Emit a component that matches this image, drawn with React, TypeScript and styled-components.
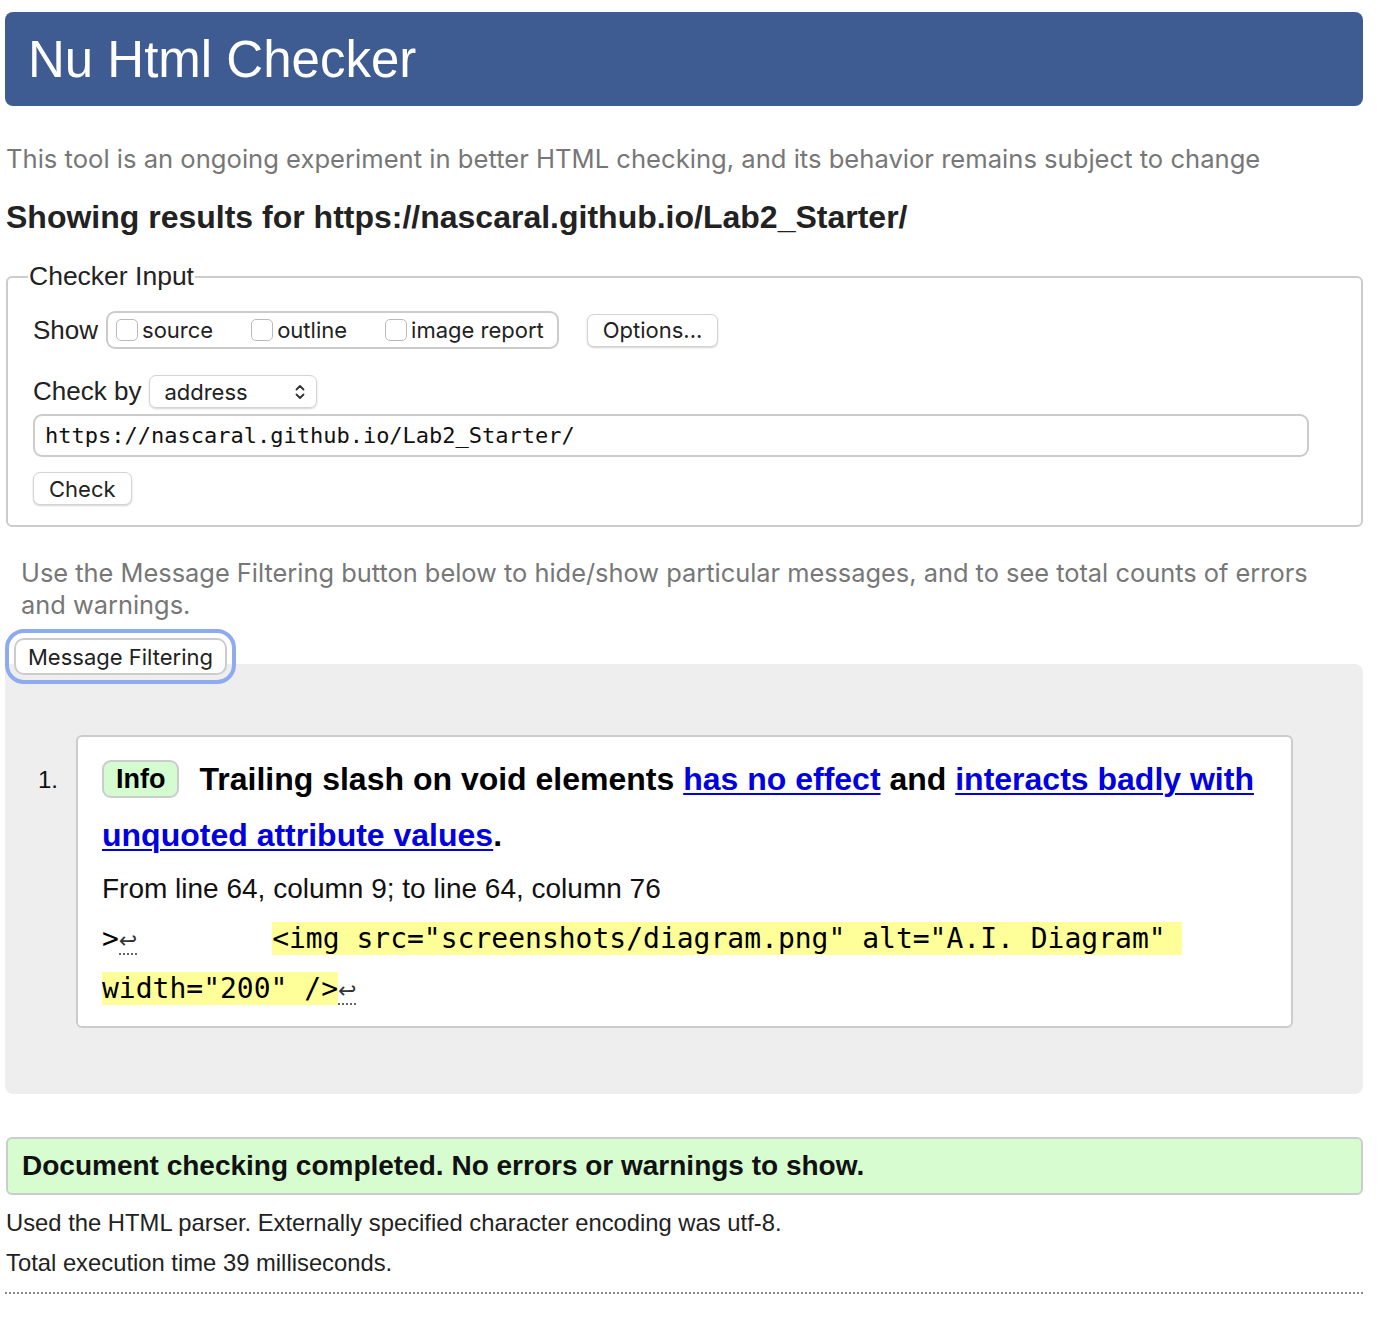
import React from 'react';
import styled, { createGlobalStyle } from 'styled-components';

const GlobalStyle = createGlobalStyle`
  html, body {
    margin: 0;
    padding: 0;
    background: #fff;
  }
  body {
    font-family: "Liberation Sans", Arial, sans-serif;
    color: #111;
  }
`;

const Page = styled.div`
  padding: 12px 33px 40px 5px;
`;

const Header = styled.h1`
  margin: 0;
  background: #3e5c92;
  color: #fff;
  border-radius: 8px;
  height: 94px;
  display: flex;
  align-items: center;
  padding-left: 23px;
  font-family: "Liberation Sans", Arial, sans-serif;
  font-weight: 400;
  font-size: 51px;
`;

const Intro = styled.p`
  margin: 37px 0 0 1px;
  font-family: Inter, "Noto Sans", sans-serif;
  font-size: 25.6px;
  line-height: 32px;
  color: #777;
`;

const ResultsFor = styled.h2`
  margin: 24px 0 0 1px;
  font-size: 32px;
  line-height: 36px;
  font-weight: 700;
  color: #222;
`;

const Fieldset = styled.fieldset`
  margin: 26px 0 0 1px;
  border: 2px solid #ccc;
  border-radius: 6px;
  padding: 19px 24px 20px 25px;
`;

const Legend = styled.legend`
  padding: 0 1px;
  margin-left: -5px;
  font-size: 26.5px;
  color: #222;
`;

const Row = styled.div<{ $top?: number }>`
  display: flex;
  align-items: center;
  gap: 8px;
  margin-top: ${p => p.$top ?? 0}px;
`;

const RowLabel = styled.span`
  font-size: 26px;
  color: #222;
`;

const CheckGroup = styled.div`
  display: flex;
  align-items: center;
  gap: 38px;
  border: 2px solid #ccc;
  border-radius: 9px;
  height: 34px;
  padding: 0 13px 0 8px;
  margin-right: 20px;
`;

const CheckItem = styled.label`
  display: flex;
  align-items: center;
  gap: 4px;
  font-family: Inter, "Noto Sans", sans-serif;
  font-size: 22px;
  color: #222;
`;

const Box = styled.span`
  width: 22px;
  height: 22px;
  border: 1.5px solid #bbb;
  border-radius: 5px;
  background: #fff;
  box-sizing: border-box;
`;

const Button = styled.button`
  font-family: Inter, "Noto Sans", sans-serif;
  font-size: 22px;
  color: #222;
  background: #fff;
  border: 1px solid #d4d4d4;
  border-radius: 7px;
  box-shadow: 0 1px 2px rgba(0, 0, 0, 0.18);
  height: 33px;
  padding: 0 15px;
  cursor: pointer;
`;

const Select = styled.div`
  display: flex;
  align-items: center;
  justify-content: space-between;
  width: 168px;
  height: 33px;
  box-sizing: border-box;
  padding: 0 10px 0 14px;
  border: 1px solid #d4d4d4;
  border-radius: 7px;
  box-shadow: 0 1px 2px rgba(0, 0, 0, 0.18);
  font-family: Inter, "Noto Sans", sans-serif;
  font-size: 22px;
  color: #222;
`;

const UrlInput = styled.div`
  margin: 6px 28px 0 0;
  height: 43px;
  box-sizing: border-box;
  border: 2px solid #ccc;
  border-radius: 9px;
  display: flex;
  align-items: center;
  padding-left: 10px;
  font-family: "DejaVu Sans Mono", monospace;
  font-size: 22px;
  color: #111;
`;

const Hint = styled.p`
  margin: 30px 0 0 16px;
  font-family: Inter, "Noto Sans", sans-serif;
  font-size: 25.4px;
  line-height: 32px;
  color: #777;
  max-width: 1320px;
`;

const FilterButton = styled(Button)`
  position: relative;
  z-index: 1;
  margin: 17px 0 0 9px;
  height: 37px;
  padding: 0 12px;
  border-radius: 10px;
  border: 2px solid #ccc;
  box-shadow: none;
  outline: 4px solid #8eaaf0;
  outline-offset: 5px;
`;

const Results = styled.div`
  margin-top: -11px;
  background: #eee;
  border-radius: 0 8px 8px 8px;
  padding: 71px 70px 66px 0;
`;

const List = styled.ol`
  margin: 0;
  padding: 0;
  list-style: none;
`;

const Item = styled.li`
  display: flex;
  align-items: flex-start;
`;

const Num = styled.span`
  width: 71px;
  box-sizing: border-box;
  padding: 0 0 0 33px;
  font-size: 24px;
  line-height: 24px;
  margin-top: 33px;
  color: #111;
`;

const Card = styled.div`
  flex: 1;
  background: #fff;
  border: 2px solid #ccc;
  border-radius: 6px;
  padding: 14px 24px 12px 24px;
`;

const Title = styled.p`
  margin: 0;
  font-size: 32px;
  line-height: 56px;
  font-weight: 700;
  color: #000;
`;

const Badge = styled.span`
  display: inline-block;
  background: #d5fcd0;
  border: 2px solid #ccc;
  border-radius: 9px;
  padding: 0 12px;
  line-height: 34px;
  font-size: 27px;
  margin-right: 20px;
  vertical-align: 2px;
`;

const Link = styled.a`
  color: #0000e0;
  text-decoration: underline;
  text-decoration-thickness: 2px;
  text-underline-offset: 3px;
`;

const Location = styled.p`
  margin: 0;
  font-size: 28px;
  line-height: 51px;
  color: #111;
`;

const Extract = styled.pre`
  margin: 0;
  font-family: "DejaVu Sans Mono", monospace;
  font-size: 28px;
  line-height: 50px;
  white-space: pre-wrap;
  color: #000;
`;

const Mark = styled.mark`
  background: #ffff99;
  color: #000;
`;

const Lf = styled.span`
  font-family: "DejaVu Sans", sans-serif;
  font-size: 22px;
  line-height: 0;
  color: #333;
  border-bottom: 2px dotted #666;
`;

const Success = styled.p`
  margin: 43px 0 0 1px;
  background: #d6fcd0;
  border: 2px solid #ccc;
  border-radius: 6px;
  padding: 0 14px;
  height: 58px;
  box-sizing: border-box;
  display: flex;
  align-items: center;
  font-size: 28px;
  font-weight: 700;
  color: #111;
`;

const Detail = styled.p<{ $first?: boolean }>`
  margin: ${p => (p.$first ? 8 : 0)}px 0 0 1px;
  font-size: 23.8px;
  line-height: 40px;
  color: #222;
`;

const Rule = styled.hr`
  margin: 9px 0 0;
  border: none;
  border-top: 2px dotted #888;
`;

const Chevrons = () => (
  <svg width="12" height="18" viewBox="0 0 12 18" fill="none" stroke="#333" strokeWidth="1.8" strokeLinecap="round" strokeLinejoin="round">
    <path d="M2.5 6.5 6 3l3.5 3.5" />
    <path d="M2.5 11.5 6 15l3.5-3.5" />
  </svg>
);

export default function App() {
  return (
    <Page>
      <GlobalStyle />
      <Header>Nu Html Checker</Header>
      <Intro>
        This tool is an ongoing experiment in better HTML checking, and its behavior remains subject to change
      </Intro>
      <ResultsFor>Showing results for https://nascaral.github.io/Lab2_Starter/</ResultsFor>

      <Fieldset>
        <Legend>Checker Input</Legend>
        <Row>
          <RowLabel>Show</RowLabel>
          <CheckGroup>
            <CheckItem><Box />source</CheckItem>
            <CheckItem><Box />outline</CheckItem>
            <CheckItem><Box />image report</CheckItem>
          </CheckGroup>
          <Button>Options...</Button>
        </Row>
        <Row $top={26}>
          <RowLabel>Check by</RowLabel>
          <Select>
            address
            <Chevrons />
          </Select>
        </Row>
        <UrlInput>https://nascaral.github.io/Lab2_Starter/</UrlInput>
        <Row $top={15}>
          <Button>Check</Button>
        </Row>
      </Fieldset>

      <Hint>
        Use the Message Filtering button below to hide/show particular messages, and to see total counts of errors and warnings.
      </Hint>
      <FilterButton>Message Filtering</FilterButton>

      <Results>
        <List>
          <Item>
            <Num>1.</Num>
            <Card>
              <Title>
                <Badge>Info</Badge>
                Trailing slash on void elements <Link href="#">has no effect</Link> and{' '}
                <Link href="#">interacts badly with unquoted attribute values</Link>.
              </Title>
              <Location>From line 64, column 9; to line 64, column 76</Location>
              <Extract>
                {'>'}<Lf>↩</Lf>{'        '}
                <Mark>{'<img src="screenshots/diagram.png" alt="A.I. Diagram" width="200" />'}</Mark>
                <Lf>↩</Lf>
              </Extract>
            </Card>
          </Item>
        </List>
      </Results>

      <Success>Document checking completed. No errors or warnings to show.</Success>
      <Detail $first>Used the HTML parser. Externally specified character encoding was utf-8.</Detail>
      <Detail>Total execution time 39 milliseconds.</Detail>
      <Rule />
    </Page>
  );
}
